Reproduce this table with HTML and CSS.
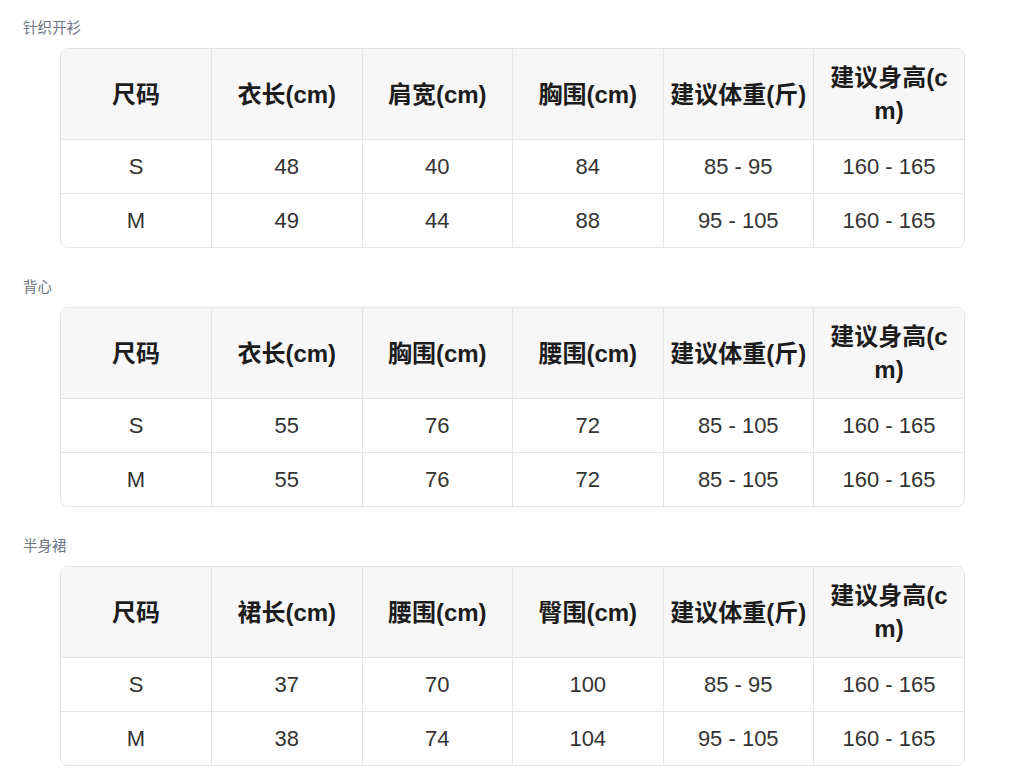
FILE: index.html
```html
<!DOCTYPE html>
<html lang="zh">
<head>
<meta charset="utf-8">
<title>尺码表</title>
<link rel="stylesheet" href="styles.css">
</head>
<body>
<div class="page">
  <section class="section">
    <div class="label">针织开衫</div>
    <div class="table-wrap">
      <table class="size-table">
        <thead>
          <tr><th>尺码</th><th>衣长(cm)</th><th>肩宽(cm)</th><th>胸围(cm)</th><th>建议体重(斤)</th><th>建议身高(cm)</th></tr>
        </thead>
        <tbody>
          <tr><td>S</td><td>48</td><td>40</td><td>84</td><td>85 - 95</td><td>160 - 165</td></tr>
          <tr><td>M</td><td>49</td><td>44</td><td>88</td><td>95 - 105</td><td>160 - 165</td></tr>
        </tbody>
      </table>
    </div>
  </section>
  <section class="section">
    <div class="label">背心</div>
    <div class="table-wrap">
      <table class="size-table">
        <thead>
          <tr><th>尺码</th><th>衣长(cm)</th><th>胸围(cm)</th><th>腰围(cm)</th><th>建议体重(斤)</th><th>建议身高(cm)</th></tr>
        </thead>
        <tbody>
          <tr><td>S</td><td>55</td><td>76</td><td>72</td><td>85 - 105</td><td>160 - 165</td></tr>
          <tr><td>M</td><td>55</td><td>76</td><td>72</td><td>85 - 105</td><td>160 - 165</td></tr>
        </tbody>
      </table>
    </div>
  </section>
  <section class="section">
    <div class="label">半身裙</div>
    <div class="table-wrap">
      <table class="size-table">
        <thead>
          <tr><th>尺码</th><th>裙长(cm)</th><th>腰围(cm)</th><th>臀围(cm)</th><th>建议体重(斤)</th><th>建议身高(cm)</th></tr>
        </thead>
        <tbody>
          <tr><td>S</td><td>37</td><td>70</td><td>100</td><td>85 - 95</td><td>160 - 165</td></tr>
          <tr><td>M</td><td>38</td><td>74</td><td>104</td><td>95 - 105</td><td>160 - 165</td></tr>
        </tbody>
      </table>
    </div>
  </section>
</div>
</body>
</html>
```

FILE: styles.css
```css
html, body {
  margin: 0;
  padding: 0;
  background: #ffffff;
}

body {
  font-family: "Liberation Sans", "Noto Sans CJK SC", sans-serif;
}

.page {
  padding: 18px 0 0 23px;
  display: flex;
  flex-direction: column;
  gap: 29px;
}

.section {
  display: flex;
  flex-direction: column;
  gap: 10px;
}

.label {
  font-size: 14.5px;
  line-height: 20px;
  color: #6b7280;
}

.table-wrap {
  margin-left: 37px;
  width: 905px;
  border: 1px solid #e5e5e8;
  border-radius: 8px;
  overflow: hidden;
  box-sizing: border-box;
}

.size-table {
  width: 100%;
  border-collapse: collapse;
  table-layout: fixed;
}

.size-table th,
.size-table td {
  text-align: center;
  vertical-align: middle;
  padding: 12px 4px;
  border-left: 1px solid #e5e5e8;
  border-top: 1px solid #e5e5e8;
  word-break: break-all;
}

.size-table tr > :first-child {
  border-left: none;
}

.size-table thead th {
  border-top: none;
  background: #f7f7f7;
  font-size: 24px;
  line-height: 33px;
  font-weight: 700;
  color: #1c1c1c;
}

.size-table tbody td {
  font-size: 22px;
  line-height: 29px;
  color: #333333;
}
```
